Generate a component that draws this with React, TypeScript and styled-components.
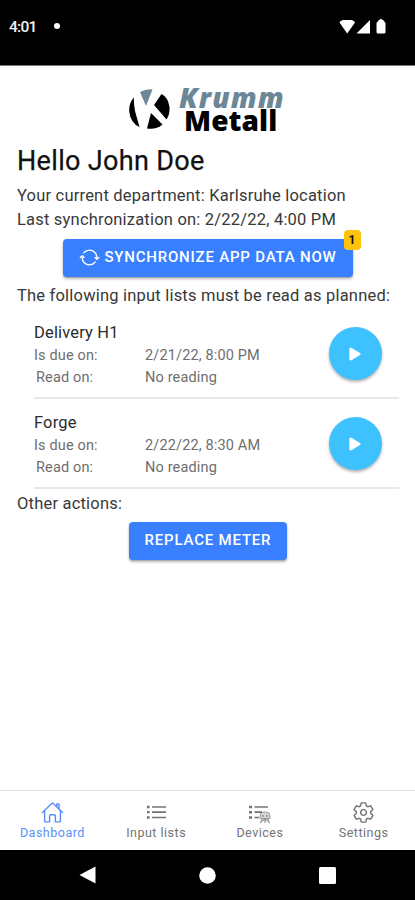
import React from "react";
import styled, { createGlobalStyle } from "styled-components";
import { IoHomeOutline, IoPlay, IoSettingsOutline, IoSyncOutline } from "react-icons/io5";

const GlobalStyle = createGlobalStyle`
  * { box-sizing: border-box; }
  body { margin: 0; background: #fff; }
`;

const Screen = styled.div`
  width: 415px;
  height: 900px;
  display: flex;
  flex-direction: column;
  overflow: hidden;
  background: #fff;
  color: #1c1c1c;
  font-family: Roboto, "Liberation Sans", sans-serif;
`;

const StatusBar = styled.header`
  height: 66px;
  flex: none;
  display: flex;
  align-items: flex-start;
  padding: 18px 28px 0 9px;
  background: #000;
  border-bottom: 1px solid #777;
  color: #f2f2f2;
`;

const Clock = styled.span`
  font-size: 15.5px;
  line-height: 19px;
  font-weight: 500;
  letter-spacing: -0.7px;
  width: 45px;
`;

const Dot = styled.span`
  width: 6px;
  height: 6px;
  margin-top: 5px;
  border-radius: 50%;
  background: #fff;
`;

const StatusIcons = styled.svg`
  margin-left: auto;
  width: 48px;
  height: 17px;
`;

const Content = styled.main`
  flex: 1;
  min-height: 0;
`;

const Brand = styled.div`
  display: flex;
  height: 77px;
  padding: 20px 0 0 129px;
`;

const Emblem = styled.svg`
  width: 42px;
  height: 44px;
  flex: none;
  margin-top: 2px;
`;

const Wordmark = styled.div`
  display: flex;
  flex-direction: column;
  margin-left: 8px;
  font-family: "Open Sans", sans-serif;
  font-weight: 800;
`;

const BrandTop = styled.span`
  font-size: 28px;
  line-height: 23px;
  height: 23px;
  font-style: italic;
  letter-spacing: 1.1px;
  color: #6b8798;
  white-space: nowrap;
`;

const BrandBottom = styled.span`
  font-size: 28px;
  line-height: 23px;
  padding-left: 5px;
  color: #000;
  letter-spacing: 0.1px;
`;

const Greeting = styled.h1`
  margin: 0 0 5px;
  padding-left: 17px;
  font-size: 27px;
  line-height: 36px;
  font-weight: 400;
  color: #111;
  -webkit-text-stroke: 0.25px #111;
  letter-spacing: 0.33px;
`;

const Line = styled.p<{ $top?: number }>`
  margin: 0;
  padding: ${(p) => p.$top ?? 0}px 0 0 17px;
  font-size: 16.5px;
  line-height: 24px;
  white-space: nowrap;
  color: #383838;
  letter-spacing: 0.2px;
`;

const ButtonRow = styled.div<{ $top: number; $bottom: number }>`
  display: flex;
  justify-content: center;
  padding: ${(p) => p.$top}px 0 ${(p) => p.$bottom}px;
`;

const ActionButton = styled.button<{ $width: number }>`
  position: relative;
  display: flex;
  align-items: center;
  justify-content: center;
  gap: 4px;
  width: ${(p) => p.$width}px;
  height: 38px;
  padding: 0 0 2px 1px;
  border: 0;
  border-radius: 4px;
  background: #3880ff;
  box-shadow: 0 2px 3px rgba(0, 0, 0, 0.28), 0 1px 1px rgba(0, 0, 0, 0.12);
  color: #fff;
  font-family: inherit;
  font-size: 15px;
  font-weight: 500;
  letter-spacing: 0.8px;
  white-space: nowrap;

  svg { flex: none; }
`;

const Badge = styled.span`
  position: absolute;
  top: -9px;
  right: -8px;
  width: 17px;
  height: 20px;
  border-radius: 4px;
  background: #ffc409;
  color: #111;
  font-size: 12px;
  font-weight: 700;
  line-height: 20px;
  letter-spacing: 0;
  text-align: center;
`;

const ReadingList = styled.div`
  margin: 0 16px 0 34px;
  padding-top: 1px;
`;

const ReadingItem = styled.section`
  display: flex;
  height: 90px;
  padding: 12px 17px 0 0;
  border-bottom: 2px solid #e8e8e8;
`;

const Details = styled.div`
  flex: 1;
`;

const ItemTitle = styled.h2`
  margin: 0;
  font-size: 16.5px;
  line-height: 24px;
  font-weight: 400;
  color: #2c2c2c;
  letter-spacing: 0.15px;
`;

const Fact = styled.div<{ $indent?: number }>`
  display: grid;
  grid-template-columns: 111px 1fr;
  font-size: 14.5px;
  line-height: 21.5px;
  color: #6e6e6e;
  letter-spacing: 0.15px;

  span:first-child { padding-left: ${(p) => p.$indent ?? 0}px; }
`;

const PlayButton = styled.button`
  width: 53px;
  height: 53px;
  margin-top: 6px;
  padding: 0 1px 0 0;
  display: grid;
  place-items: center;
  border: 0;
  border-radius: 50%;
  background: #3dc2ff;
  box-shadow: 0 2px 3px rgba(0, 0, 0, 0.3);
  color: #fff;
`;

const TabBar = styled.nav`
  height: 60px;
  flex: none;
  display: grid;
  grid-template-columns: repeat(4, 1fr);
  border-top: 1px solid #e4e4e4;
`;

const Tab = styled.div<{ $active?: boolean }>`
  display: flex;
  flex-direction: column;
  align-items: center;
  padding: 10px 0 0 1px;
  color: ${(p) => (p.$active ? "#5a8ffa" : "#747474")};
  font-size: 12.5px;
  line-height: 16px;
  letter-spacing: 0.5px;

  svg { flex: none; margin-bottom: 1px; }
`;

const SystemBar = styled.footer`
  height: 50px;
  flex: none;
  display: flex;
  align-items: center;
  justify-content: space-between;
  padding: 0 79px;
  background: #000;
`;

const readings = [
  { name: "Delivery H1", due: "2/21/22, 8:00 PM" },
  { name: "Forge", due: "2/22/22, 8:30 AM" },
];

const ListIcon = () => (
  <svg width="23" height="23" viewBox="0 0 23 23" fill="none" stroke="currentColor">
    <path d="M7 6H21M7 11.200H21M7 16.500H21" strokeWidth="1.700" />
    <path d="M2 6h2.600M2 11.200h2.600M2 16.500h2.600" strokeWidth="2.300" />
  </svg>
);

const DeviceListIcon = () => (
  <svg width="23" height="23" viewBox="0 0 23 23" fill="none" stroke="currentColor">
    <path d="M6.500 6H20M6.500 11.200H14M6.500 16.500H11" strokeWidth="1.700" />
    <path d="M1 6h3M1 11.200h3M1 16.500h3" strokeWidth="2.400" />
    <path d="M12 17.500v-2.500q0-4 4-4h2q4 0 4 4v2.500z" fill="currentColor" fillOpacity="0.4" strokeWidth="1" opacity="0.7" />
    <path d="M13 19h8M12 22l3-3M17 17v5M19 19l3 3M14 15h2M18 15h2" strokeWidth="1.400" opacity="0.7" />
  </svg>
);

export default function App() {
  return (
    <Screen>
      <GlobalStyle />
      <StatusBar>
        <Clock>4:01</Clock>
        <Dot />
        <StatusIcons viewBox="0 0 48 17" fill="#fff">
          <path d="M0.500 4.500Q1 2.500 4 2H12.500Q15.500 2.500 16 4.500L8.200 15.500z" />
          <path d="M17.500 15.500L31 2v13.500z" />
          <path d="M37.500 5l2-2.500L42 .8l2.500 1.700 2 2.500V14q0 1.500-1.500 1.500h-6q-1.500 0-1.500-1.500z" />
        </StatusIcons>
      </StatusBar>
      <Content>
        <Brand>
          <Emblem viewBox="0 0 42 44">
            <path d="M11 4Q17 .8 23.500 1.500L17 18z" fill="#6b8798" />
            <path d="M5 9.500Q-.5 15 .3 24 1.500 35 10.500 39L6 23Q4.500 15 5 9.500z" />
            <path d="M32.500 6L25 17 37.500 31.500Q41 26 40.500 19 39 9 32.500 6z" />
            <path d="M22 25L18 40.500Q27 42 33.500 36.500z" />
          </Emblem>
          <Wordmark>
            <BrandTop>Krumm</BrandTop>
            <BrandBottom>Metall</BrandBottom>
          </Wordmark>
        </Brand>
        <Greeting>Hello John Doe</Greeting>
        <Line>Your current department: Karlsruhe location</Line>
        <Line>Last synchronization on: 2/22/22, 4:00 PM</Line>
        <ButtonRow $top={7} $bottom={7}>
          <ActionButton $width={290}>
            <IoSyncOutline size={21} />
            SYNCHRONIZE APP DATA NOW
            <Badge>1</Badge>
          </ActionButton>
        </ButtonRow>
        <Line>The following input lists must be read as planned:</Line>
        <ReadingList>
          {readings.map((r) => (
            <ReadingItem key={r.name}>
              <Details>
                <ItemTitle>{r.name}</ItemTitle>
                <Fact>
                  <span>Is due on:</span>
                  <span>{r.due}</span>
                </Fact>
                <Fact $indent={2}>
                  <span>Read on:</span>
                  <span>No reading</span>
                </Fact>
              </Details>
              <PlayButton aria-label="Start reading">
                <IoPlay size={18} />
              </PlayButton>
            </ReadingItem>
          ))}
        </ReadingList>
        <Line $top={3}>Other actions:</Line>
        <ButtonRow $top={6} $bottom={0}>
          <ActionButton $width={158}>REPLACE METER</ActionButton>
        </ButtonRow>
      </Content>
      <TabBar>
        <Tab $active>
          <IoHomeOutline size={23} />
          Dashboard
        </Tab>
        <Tab>
          <ListIcon />
          Input lists
        </Tab>
        <Tab>
          <DeviceListIcon />
          Devices
        </Tab>
        <Tab>
          <IoSettingsOutline size={23} />
          Settings
        </Tab>
      </TabBar>
      <SystemBar>
        <svg width="17" height="18" viewBox="0 0 17 18" fill="#fff"><path d="M16.500.5v17L.5 9z" /></svg>
        <svg width="17" height="17" viewBox="0 0 17 17" fill="#fff"><circle cx="8.500" cy="8.500" r="8.300" /></svg>
        <svg width="17" height="17" viewBox="0 0 17 17" fill="#fff"><rect width="17" height="17" rx="1.500" /></svg>
      </SystemBar>
    </Screen>
  );
}
